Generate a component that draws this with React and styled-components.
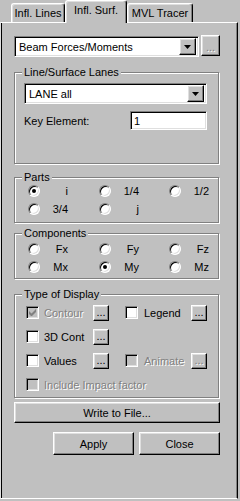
import React from 'react'
import styled, { createGlobalStyle, css } from 'styled-components'

const GlobalStyle = createGlobalStyle`
  body {
    margin: 0;
    background: #c0c0c0;
    font-family: "Liberation Sans", Arial, sans-serif;
    font-size: 11px;
    color: #000;
  }
  * { box-sizing: border-box; }
`

const raised = css`
  border: 1px solid;
  border-color: #fff #000 #000 #fff;
  box-shadow: inset -1px -1px #808080, inset 1px 1px #dfdfdf;
  background: #c0c0c0;
`

const sunken = css`
  border: 1px solid;
  border-color: #808080 #fff #fff #808080;
  box-shadow: inset 1px 1px #000, inset -1px -1px #dfdfdf;
`

const disabledText = css`
  color: #808080;
  text-shadow: 1px 1px 0 #fff;
`

const Window = styled.div`
  width: 240px;
  height: 501px;
  background: #c0c0c0;
  overflow: hidden;
`

const TabStrip = styled.div`
  display: flex;
  align-items: flex-end;
  height: 22px;
  padding-left: 11px;
`

const Tab = styled.div`
  position: relative;
  width: ${p => p.w}px;
  height: ${p => (p.active ? 23 : 19)}px;
  margin-bottom: ${p => (p.active ? -1 : 0)}px;
  padding-bottom: ${p => (p.active ? 4 : 1)}px;
  z-index: ${p => (p.active ? 2 : 1)};
  display: flex;
  align-items: center;
  justify-content: center;
  background: #c0c0c0;
  border-top: 1px solid #fff;
  border-left: 1px solid #fff;
  border-right: 1px solid #000;
  border-radius: 3px 3px 0 0;
  box-shadow: inset -1px 0 #808080, inset 1px 1px #dfdfdf;
  white-space: nowrap;
`

const Panel = styled.div`
  position: relative;
  z-index: 1;
  width: 238px;
  height: 477px;
  padding: 13px 17px 0 13px;
  border-top: 1px solid #fff;
  border-left: 1px solid #dfdfdf;
  border-right: 1px solid #000;
  border-bottom: 1px solid #fff;
  box-shadow: inset 1px 0 #000, inset -1px 0 #808080;
  display: flex;
  flex-direction: column;
`

const Row = styled.div`
  display: flex;
  align-items: flex-start;
  gap: 2px;
`

const Combo = styled.div`
  ${sunken};
  width: ${p => p.w}px;
  height: 21px;
  padding: 2px;
  background: #fff;
  display: flex;
  align-items: center;
`

const ComboText = styled.span`
  flex: 1;
  padding-left: 2px;
  white-space: nowrap;
`

const DropButton = styled.div`
  ${raised};
  width: 17px;
  height: 17px;
  display: flex;
  align-items: center;
  justify-content: center;
`

const DotsButton = styled.div`
  ${raised};
  width: ${p => p.w || 16}px;
  height: ${p => p.h || 16}px;
  margin-top: ${p => p.mt || 0}px;
  display: flex;
  align-items: flex-end;
  justify-content: center;
  padding-bottom: 2px;
  font-size: 11px;
  line-height: 1;
  ${p => p.disabled && disabledText};
`

const Group = styled.fieldset`
  margin: ${p => p.mt}px 0 0 0;
  padding: 0;
  min-width: 0;
  width: 205px;
  border: 1px solid #808080;
  box-shadow: 1px 1px 0 #fff, inset 1px 1px 0 #fff;
`

const Legend = styled.legend`
  margin-left: 7px;
  padding: 0 2px;
  line-height: 13px;
  background: #c0c0c0;
  white-space: nowrap;
`

const GroupBody = styled.div`
  padding: ${p => p.pad};
`

const KeyRow = styled.div`
  display: flex;
  align-items: center;
  justify-content: space-between;
  margin-top: 7px;
`

const TextInput = styled.input`
  ${sunken};
  width: 77px;
  height: 19px;
  padding: 0 3px;
  margin: 0;
  font: inherit;
  background: #fff;
  outline: none;
`

const RadioGrid = styled.div`
  display: grid;
  grid-template-columns: 71px 70px 40px;
  grid-auto-rows: 14px;
  row-gap: 4px;
`

const Option = styled.label`
  width: 40px;
  display: flex;
  align-items: center;
`

const OptionText = styled.span`
  flex: 1;
  text-align: right;
  white-space: nowrap;
`

const RadioDot = styled.span`
  position: relative;
  width: 12px;
  height: 12px;
  border-radius: 50%;
  border: 1px solid;
  border-color: #808080 #fff #fff #808080;
  box-shadow: inset 1px 1px #000, inset -1px -1px #dfdfdf;
  background: #fff;
  flex: none;
  &::after {
    content: '';
    display: ${p => (p.checked ? 'block' : 'none')};
    position: absolute;
    left: 3px;
    top: 3px;
    width: 4px;
    height: 4px;
    border-radius: 50%;
    background: #000;
  }
`

const CheckGrid = styled.div`
  display: grid;
  grid-template-columns: 67px 16px 16px 66px 16px;
  grid-auto-rows: 17px;
  row-gap: 7px;
  align-items: center;
`

const CheckItem = styled.label`
  display: flex;
  align-items: center;
  gap: ${p => p.gap || 5}px;
  white-space: nowrap;
  grid-column: ${p => p.span || 'auto'};
  ${p => p.disabled && disabledText};
`

const Box = styled.span`
  ${sunken};
  width: 13px;
  height: 13px;
  flex: none;
  display: flex;
  align-items: center;
  justify-content: center;
  background: ${p => (p.disabled ? '#c0c0c0' : '#fff')};
`

const WideButton = styled.div`
  ${raised};
  width: 206px;
  height: 21px;
  margin-top: 4px;
  display: flex;
  align-items: center;
  justify-content: center;
`

const Footer = styled.div`
  display: flex;
  justify-content: flex-end;
  gap: 5px;
  margin-top: 9px;
  width: 206px;
`

const PushButton = styled.div`
  ${raised};
  width: 81px;
  height: 23px;
  display: flex;
  align-items: center;
  justify-content: center;
`

const Arrow = () => (
  <svg width="7" height="4" viewBox="0 0 7 4">
    <polygon points="0,0 7,0 3.5,4" fill="#000" />
  </svg>
)

const Check = ({ color }) => (
  <svg width="7" height="7" viewBox="0 0 7 7">
    <path d="M0 2v3l2 2h1l4-4V0L2.5 4.5z" fill={color} />
  </svg>
)

const Radio = ({ label, checked }) => (
  <Option>
    <RadioDot checked={checked} />
    <OptionText>{label}</OptionText>
  </Option>
)

const CheckBox = ({ label, checked, disabled, gap }) => (
  <CheckItem disabled={disabled} gap={gap}>
    <Box disabled={disabled}>{checked && <Check color={disabled ? '#808080' : '#000'} />}</Box>
    {label}
  </CheckItem>
)

const Spacer = styled.span``

export default function App() {
  return (
    <Window>
      <GlobalStyle />
      <TabStrip>
        <Tab w={54}>Infl. Lines</Tab>
        <Tab w={62} active>Infl. Surf.</Tab>
        <Tab w={66}>MVL Tracer</Tab>
      </TabStrip>
      <Panel>
        <Row>
          <Combo w={185}>
            <ComboText>Beam Forces/Moments</ComboText>
            <DropButton><Arrow /></DropButton>
          </Combo>
          <DotsButton w={19} h={21} mt={-1} disabled>...</DotsButton>
        </Row>

        <Group mt={9}>
          <Legend>Line/Surface Lanes</Legend>
          <GroupBody pad="4px 11px 33px 9px">
            <Combo w={183}>
              <ComboText>LANE all</ComboText>
              <DropButton><Arrow /></DropButton>
            </Combo>
            <KeyRow>
              <span>Key Element:</span>
              <TextInput defaultValue="1" />
            </KeyRow>
          </GroupBody>
        </Group>

        <Group mt={7}>
          <Legend>Parts</Legend>
          <GroupBody pad="0 0 6px 13px">
            <RadioGrid>
              <Radio label="i" checked />
              <Radio label="1/4" />
              <Radio label="1/2" />
              <Radio label="3/4" />
              <Radio label="j" />
            </RadioGrid>
          </GroupBody>
        </Group>

        <Group mt={4}>
          <Legend>Components</Legend>
          <GroupBody pad="2px 0 4px 13px">
            <RadioGrid>
              <Radio label="Fx" />
              <Radio label="Fy" />
              <Radio label="Fz" />
              <Radio label="Mx" />
              <Radio label="My" checked />
              <Radio label="Mz" />
            </RadioGrid>
          </GroupBody>
        </Group>

        <Group mt={9}>
          <Legend>Type of Display</Legend>
          <GroupBody pad="3px 0 4px 11px">
            <CheckGrid>
              <CheckBox label="Contour" checked disabled />
              <DotsButton>...</DotsButton>
              <Spacer />
              <CheckBox label="Legend" gap={6} />
              <DotsButton>...</DotsButton>

              <CheckBox label="3D Cont" />
              <DotsButton>...</DotsButton>
              <Spacer />
              <Spacer />
              <Spacer />

              <CheckBox label="Values" />
              <DotsButton>...</DotsButton>
              <Spacer />
              <CheckBox label="Animate" gap={6} disabled />
              <DotsButton disabled>...</DotsButton>

              <CheckItem span="1 / 6" disabled>
                <Box disabled />
                Include Impact factor
              </CheckItem>
            </CheckGrid>
          </GroupBody>
        </Group>

        <WideButton>Write to File...</WideButton>

        <Footer>
          <PushButton>Apply</PushButton>
          <PushButton>Close</PushButton>
        </Footer>
      </Panel>
    </Window>
  )
}
